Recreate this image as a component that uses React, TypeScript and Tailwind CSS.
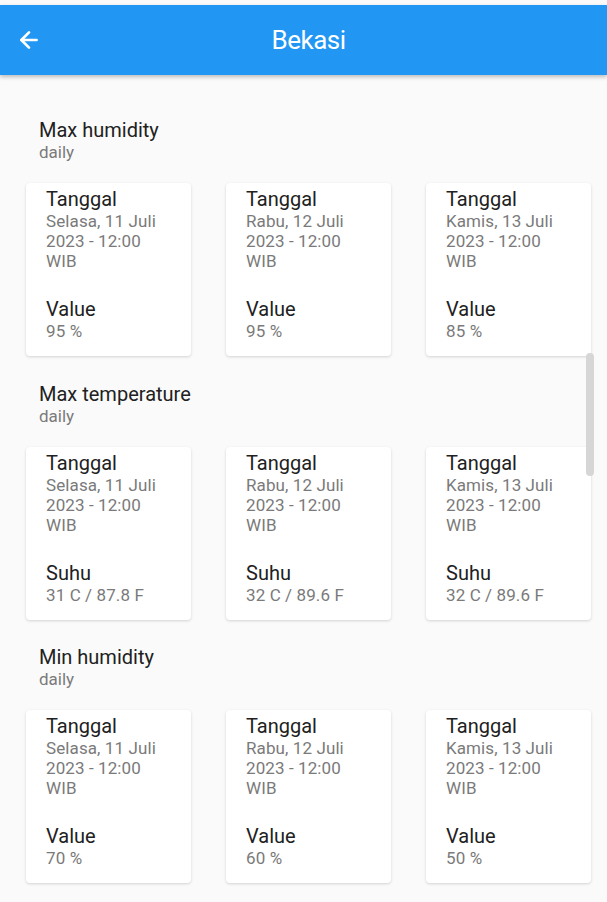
import { ArrowLeft } from 'lucide-react';

interface Item {
  date: string;
  value: string;
}

interface Section {
  title: string;
  label: string;
  items: Item[];
}

const sections: Section[] = [
  {
    title: 'Max humidity',
    label: 'Value',
    items: [
      { date: 'Selasa, 11 Juli 2023 - 12:00 WIB', value: '95 %' },
      { date: 'Rabu, 12 Juli 2023 - 12:00 WIB', value: '95 %' },
      { date: 'Kamis, 13 Juli 2023 - 12:00 WIB', value: '85 %' },
    ],
  },
  {
    title: 'Max temperature',
    label: 'Suhu',
    items: [
      { date: 'Selasa, 11 Juli 2023 - 12:00 WIB', value: '31 C / 87.8 F' },
      { date: 'Rabu, 12 Juli 2023 - 12:00 WIB', value: '32 C / 89.6 F' },
      { date: 'Kamis, 13 Juli 2023 - 12:00 WIB', value: '32 C / 89.6 F' },
    ],
  },
  {
    title: 'Min humidity',
    label: 'Value',
    items: [
      { date: 'Selasa, 11 Juli 2023 - 12:00 WIB', value: '70 %' },
      { date: 'Rabu, 12 Juli 2023 - 12:00 WIB', value: '60 %' },
      { date: 'Kamis, 13 Juli 2023 - 12:00 WIB', value: '50 %' },
    ],
  },
];

function Card({ item, label }: { item: Item; label: string }) {
  return (
    <div className="rounded bg-white pl-5 pr-6 pt-1 pb-[15px] shadow-[0_1px_3px_rgba(0,0,0,0.16)]">
      <p className="text-[20px] leading-6 text-[#212121]">Tanggal</p>
      <p className="text-[17px] leading-5 tracking-[0.1px] text-[#7a7a7a]">{item.date}</p>
      <p className="mt-[26px] text-[20px] leading-6 text-[#212121]">{label}</p>
      <p className="text-[17px] leading-5 tracking-[0.1px] text-[#7a7a7a]">{item.value}</p>
    </div>
  );
}

export default function App() {
  return (
    <div className="relative h-[902px] overflow-hidden bg-[#fafafa] pt-[5px] font-['Roboto',sans-serif]">
      <header className="relative z-10 flex h-[70px] items-center bg-[#2196f3] shadow-[0_2px_4px_rgba(0,0,0,0.25)]">
        <button className="ml-4 text-white">
          <ArrowLeft size={26} strokeWidth={2.5} />
        </button>
        <h1 className="absolute left-1/2 ml-[5px] -translate-x-1/2 text-[26px] tracking-[-0.5px] text-white">
          Bekasi
        </h1>
      </header>

      <main className="pl-[26px] pr-4 pt-[43px]">
        {sections.map((s) => (
          <section key={s.title} className="mb-[25.5px]">
            <div className="pl-[13px]">
              <h2 className="text-[20px] leading-6 text-[#212121]">{s.title}</h2>
              <p className="text-[17px] leading-5 text-[#7a7a7a]">daily</p>
            </div>
            <div className="mt-[21px] grid grid-cols-3 gap-[35px]">
              {s.items.map((it) => (
                <Card key={it.date} item={it} label={s.label} />
              ))}
            </div>
          </section>
        ))}
      </main>

      <div className="absolute left-[586px] top-[353px] h-[123px] w-2 rounded-full bg-[#d6d6d6]" />
    </div>
  );
}
